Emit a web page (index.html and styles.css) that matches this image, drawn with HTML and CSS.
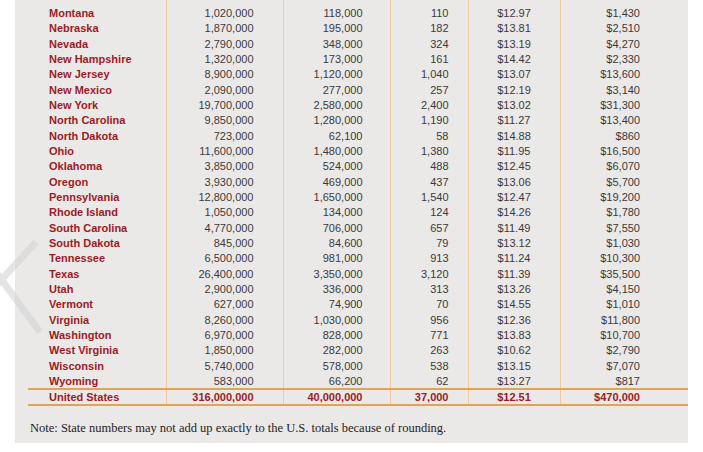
FILE: index.html
```html
<!DOCTYPE html>
<html lang="en">
<head>
<meta charset="utf-8">
<title>State table</title>
<link rel="stylesheet" href="styles.css">
</head>
<body>
<div class="panel">
  <table class="data">
    <colgroup>
      <col class="c-name"><col class="c-pop"><col class="c-a"><col class="c-b"><col class="c-c"><col class="c-d">
    </colgroup>
    <tbody>
      <tr><td>Montana</td><td>1,020,000</td><td>118,000</td><td>110</td><td>$12.97</td><td>$1,430</td></tr>
      <tr><td>Nebraska</td><td>1,870,000</td><td>195,000</td><td>182</td><td>$13.81</td><td>$2,510</td></tr>
      <tr><td>Nevada</td><td>2,790,000</td><td>348,000</td><td>324</td><td>$13.19</td><td>$4,270</td></tr>
      <tr><td>New Hampshire</td><td>1,320,000</td><td>173,000</td><td>161</td><td>$14.42</td><td>$2,330</td></tr>
      <tr><td>New Jersey</td><td>8,900,000</td><td>1,120,000</td><td>1,040</td><td>$13.07</td><td>$13,600</td></tr>
      <tr><td>New Mexico</td><td>2,090,000</td><td>277,000</td><td>257</td><td>$12.19</td><td>$3,140</td></tr>
      <tr><td>New York</td><td>19,700,000</td><td>2,580,000</td><td>2,400</td><td>$13.02</td><td>$31,300</td></tr>
      <tr><td>North Carolina</td><td>9,850,000</td><td>1,280,000</td><td>1,190</td><td>$11.27</td><td>$13,400</td></tr>
      <tr><td>North Dakota</td><td>723,000</td><td>62,100</td><td>58</td><td>$14.88</td><td>$860</td></tr>
      <tr><td>Ohio</td><td>11,600,000</td><td>1,480,000</td><td>1,380</td><td>$11.95</td><td>$16,500</td></tr>
      <tr><td>Oklahoma</td><td>3,850,000</td><td>524,000</td><td>488</td><td>$12.45</td><td>$6,070</td></tr>
      <tr><td>Oregon</td><td>3,930,000</td><td>469,000</td><td>437</td><td>$13.06</td><td>$5,700</td></tr>
      <tr><td>Pennsylvania</td><td>12,800,000</td><td>1,650,000</td><td>1,540</td><td>$12.47</td><td>$19,200</td></tr>
      <tr><td>Rhode Island</td><td>1,050,000</td><td>134,000</td><td>124</td><td>$14.26</td><td>$1,780</td></tr>
      <tr><td>South Carolina</td><td>4,770,000</td><td>706,000</td><td>657</td><td>$11.49</td><td>$7,550</td></tr>
      <tr><td>South Dakota</td><td>845,000</td><td>84,600</td><td>79</td><td>$13.12</td><td>$1,030</td></tr>
      <tr><td>Tennessee</td><td>6,500,000</td><td>981,000</td><td>913</td><td>$11.24</td><td>$10,300</td></tr>
      <tr><td>Texas</td><td>26,400,000</td><td>3,350,000</td><td>3,120</td><td>$11.39</td><td>$35,500</td></tr>
      <tr><td>Utah</td><td>2,900,000</td><td>336,000</td><td>313</td><td>$13.26</td><td>$4,150</td></tr>
      <tr><td>Vermont</td><td>627,000</td><td>74,900</td><td>70</td><td>$14.55</td><td>$1,010</td></tr>
      <tr><td>Virginia</td><td>8,260,000</td><td>1,030,000</td><td>956</td><td>$12.36</td><td>$11,800</td></tr>
      <tr><td>Washington</td><td>6,970,000</td><td>828,000</td><td>771</td><td>$13.83</td><td>$10,700</td></tr>
      <tr><td>West Virginia</td><td>1,850,000</td><td>282,000</td><td>263</td><td>$10.62</td><td>$2,790</td></tr>
      <tr><td>Wisconsin</td><td>5,740,000</td><td>578,000</td><td>538</td><td>$13.15</td><td>$7,070</td></tr>
      <tr><td>Wyoming</td><td>583,000</td><td>66,200</td><td>62</td><td>$13.27</td><td>$817</td></tr>
      <tr class="total"><td>United States</td><td>316,000,000</td><td>40,000,000</td><td>37,000</td><td>$12.51</td><td>$470,000</td></tr>
    </tbody>
  </table>
  <p class="note">Note: State numbers may not add up exactly to the U.S. totals because of rounding.</p>
</div>
<svg class="mark" width="60" height="110" viewBox="0 0 60 110" aria-hidden="true">
  <path d="M36 2 L-10 52 M-10 24 L40 92" stroke="#d4d4d4" stroke-width="7" stroke-opacity="0.6" fill="none"/>
</svg>
</body>
</html>
```

FILE: styles.css
```css
html, body {
  margin: 0;
  padding: 0;
  background: #ffffff;
}

body {
  position: relative;
  width: 703px;
  height: 452px;
  overflow: hidden;
}

.panel {
  margin-left: 15px;
  width: 673px;
  background: #ebe9e8;
  padding: 0 0 8px 13px;
  box-sizing: border-box;
}

.data {
  width: 660px;
  table-layout: fixed;
  border-collapse: collapse;
  font-family: "Liberation Sans", Arial, sans-serif;
  font-size: 11px;
  color: #3a3a3a;
}

.c-name { width: 138px; }
.c-pop { width: 117px; }
.c-a { width: 107px; }
.c-b { width: 78px; }
.c-c { width: 92px; }
.c-d { width: 128px; }

.data td {
  padding: 1px 0 0 0;
  height: 14.33px;
  line-height: 14.33px;
  white-space: nowrap;
  text-align: right;
  border-left: 1px solid #f0cb9f;
}

.data tr:first-child td {
  padding-top: 6px;
}

.data td:nth-child(1) {
  text-align: left;
  padding-left: 21px;
  font-weight: bold;
  color: #9c1b24;
  border-left: 0;
}

.data td:nth-child(2) { padding-right: 29px; }
.data td:nth-child(3) { padding-right: 27px; }
.data td:nth-child(4) { padding-right: 19px; }
.data td:nth-child(5) { text-align: center; }
.data td:nth-child(6) { padding-right: 48px; }

.data tr.total td {
  font-weight: bold;
  color: #9c1b24;
  height: 13px;
  line-height: 13px;
  border-top: 2px solid #dea457;
  border-bottom: 2px solid #dea457;
}

.note {
  margin: 14.5px 0 0 2px;
  font-family: "Liberation Serif", "Times New Roman", serif;
  font-size: 12.5px;
  line-height: 14px;
  color: #222222;
}

.mark {
  position: absolute;
  left: 0;
  top: 240px;
}
```
